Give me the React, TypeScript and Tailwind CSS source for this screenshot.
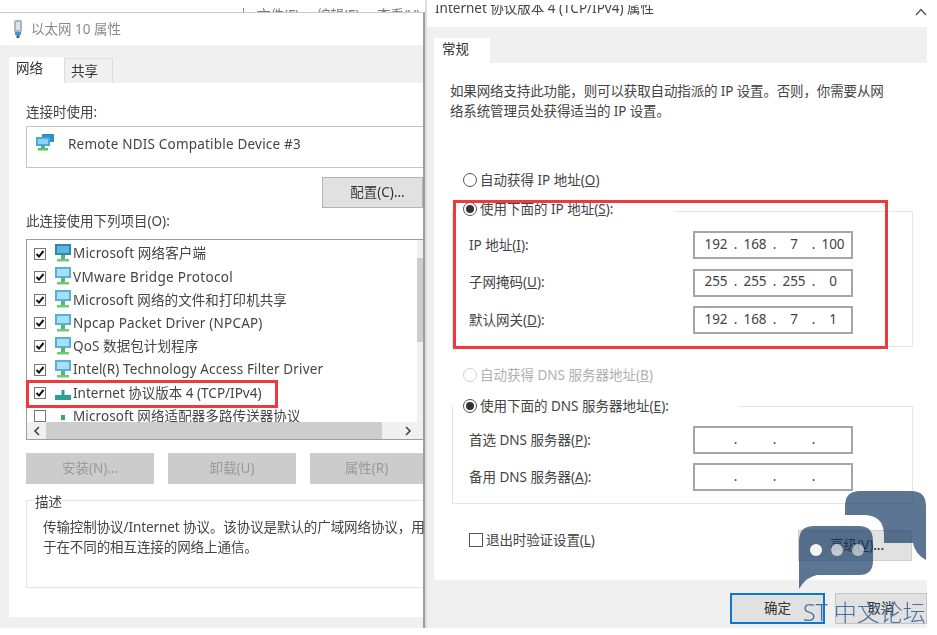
const fontStack = "font-['Noto_Sans','Noto_Sans_CJK_SC',sans-serif]"

const Radio = ({ checked, disabled }: { checked?: boolean; disabled?: boolean }) => (
  <span
    className={`flex h-[14px] w-[14px] shrink-0 items-center justify-center rounded-full border ${
      disabled ? "border-[#cfcfcf]" : "border-[#555]"
    }`}>
    {checked && <span className="h-[8px] w-[8px] rounded-full bg-[#333]" />}
  </span>
)

const Check = ({ checked }: { checked: boolean }) => (
  <span className="flex h-[12px] w-[12px] shrink-0 items-center justify-center border border-[#777] bg-white">
    {checked && (
      <svg width="10" height="10" viewBox="0 0 10 10" fill="none">
        <path d="M1.5 5 4 7.6 8.5 2" stroke="#111" strokeWidth="2" />
      </svg>
    )}
  </span>
)

const MonitorIcon = ({ dark }: { dark?: boolean }) => (
  <svg width="18" height="19" viewBox="0 0 18 19" className="shrink-0">
    <rect x="1" y="0" width="16" height="11" fill={dark ? "#2f86b4" : "#55b0dc"} />
    <rect x="3" y="2" width="12" height="7" fill={dark ? "#5fb6da" : "#a5e0f4"} />
    <rect x="7" y="11" width="4" height="4" fill="#59b868" />
    <rect x="3" y="15" width="12" height="2.5" fill="#6ccb78" />
  </svg>
)

const AdapterIcon = () => (
  <svg width="18" height="18" viewBox="0 0 18 18" className="shrink-0">
    <rect x="7.5" y="6" width="3" height="6" fill="#2d9c8c" />
    <rect x="1" y="11" width="16" height="5" fill="#2f9f92" />
  </svg>
)

const SmallAdapterIcon = () => (
  <svg width="18" height="18" viewBox="0 0 18 18" className="shrink-0">
    <rect x="7" y="8" width="4" height="5" fill="#3aa85c" />
  </svg>
)

const DeviceIcon = () => (
  <svg width="18" height="17" viewBox="0 0 18 17" className="shrink-0">
    <rect x="6" y="0" width="12" height="8" fill="#2f8fc8" />
    <rect x="0" y="3" width="14" height="9" fill="#4aa8dc" />
    <rect x="2" y="5" width="10" height="5" fill="#8dd2f0" />
    <rect x="5" y="12" width="4" height="2" fill="#58b565" />
    <rect x="2" y="14" width="10" height="2.5" fill="#5cbf6c" />
  </svg>
)

const PlugIcon = () => (
  <svg width="10" height="18" viewBox="0 0 10 18">
    <rect x="1" y="0" width="8" height="12" rx="1.5" fill="#a9b6c2" />
    <rect x="3" y="2" width="4" height="8" fill="#dbe4ea" />
    <rect x="2" y="12" width="6" height="3" fill="#4d8fc0" />
    <rect x="3.5" y="15" width="3" height="3" fill="#2f6f9f" />
  </svg>
)

const Chevron = ({ dir }: { dir: "left" | "right" }) => (
  <svg width="8" height="10" viewBox="0 0 8 10" fill="none">
    <path d={dir === "left" ? "M6 1 2 5l4 4" : "M2 1l4 4-4 4"} stroke="#444" strokeWidth="1.6" />
  </svg>
)

const items = [
  { label: "Microsoft 网络客户端", checked: true, icon: <MonitorIcon dark />, tracking: "tracking-[0.15px]" },
  { label: "VMware Bridge Protocol", checked: true, icon: <MonitorIcon />, tracking: "tracking-[0.3px]" },
  { label: "Microsoft 网络的文件和打印机共享", checked: true, icon: <MonitorIcon />, tracking: "tracking-[0.1px]" },
  { label: "Npcap Packet Driver (NPCAP)", checked: true, icon: <MonitorIcon />, tracking: "tracking-[0.2px]" },
  { label: "QoS 数据包计划程序", checked: true, icon: <MonitorIcon />, tracking: "tracking-[0.1px]" },
  { label: "Intel(R) Technology Access Filter Driver", checked: true, icon: <MonitorIcon />, tracking: "tracking-[0.13px]" },
  { label: "Internet 协议版本 4 (TCP/IPv4)", checked: true, icon: <AdapterIcon />, tracking: "tracking-[0px]" },
  { label: "Microsoft 网络适配器多路传送器协议", checked: false, icon: <SmallAdapterIcon />, tracking: "tracking-[0.1px]" }
]

const IpInput = ({ parts }: { parts: string[] }) => (
  <div className="flex h-[28px] w-[160px] shrink-0 items-center border-2 border-[#a6a6a6] bg-white pb-[2px] pl-[7px] text-[#444]">
    {parts.map((part, i) => (
      <div key={i} className="flex">
        <span className="w-[28px] text-center">{part}</span>
        {i < 3 && <span className="w-[11px] text-center">.</span>}
      </div>
    ))}
  </div>
)

const FieldRow = ({ label, parts }: { label: React.ReactNode; parts: string[] }) => (
  <div className="flex items-center pl-[16px]">
    <div className="w-[224px] text-[#444]">{label}</div>
    <IpInput parts={parts} />
  </div>
)

const LeftWindow = () => (
  <div className="flex h-[628px] w-[425px] shrink-0 flex-col">
    <div className="flex h-[12px] items-start overflow-hidden pl-[243px] text-[#777]">
      <span className="mt-[8px] h-[4px] w-[1px] bg-[#888]" />
      <span className="mt-[5px] ml-[13px] w-[60px] leading-[20px]">文件(F)</span>
      <span className="mt-[5px] w-[60px] leading-[20px]">编辑(E)</span>
      <span className="mt-[5px] leading-[20px]">查看(V)</span>
    </div>
    <div className="flex min-h-0 flex-1 flex-col border-t border-r-2 border-t-[#c8c8c8] border-r-[#9c9c9c]">
      <div className="flex h-[32px] items-center gap-[9px] pl-[13px] text-[#8a8a8a]">
        <PlugIcon />
        <span className="-ml-[1px]">以太网 10 属性</span>
      </div>
      <div className="flex flex-1 flex-col bg-[#f0f0f0] pl-[9px]">
        <div className="flex h-[38px] items-end">
          <div className="flex h-[26px] w-[55px] items-center bg-white pb-[4px] pl-[7px] text-[#333]">网络</div>
          <div className="flex h-[25px] w-[49px] items-center border border-b-0 border-[#dcdcdc] pl-[6px] text-[#333]">
            共享
          </div>
        </div>
        <div className="flex h-[534px] flex-col bg-white pl-[17px]">
          <div className="mt-[19px] h-[20px] text-[#444]">连接时使用:</div>
          <div className="mt-[4px] flex h-[42px] items-start gap-[14px] border border-r-0 border-[#c4c4c4] pt-[7px] pl-[9px] tracking-[0.2px] text-[#444]">
            <DeviceIcon />
            <span>Remote NDIS Compatible Device #3</span>
          </div>
          <button className="mt-[9px] h-[31px] w-[101px] self-end border border-[#b4b4b4] bg-[#e1e1e1] pl-[10px] text-[#333]">
            配置(C)...
          </button>
          <div className="mt-[3px] h-[20px] text-[#444]">此连接使用下列项目(O):</div>
          <div className="mt-[8px] flex h-[201px] flex-col border border-r-0 border-[#9d9d9d]">
            <div className="flex min-h-0 flex-1">
              <div className="min-w-0 flex-1 overflow-hidden pt-[2px]">
                {items.map(item => (
                  <div
                    key={item.label}
                    className={`flex h-[23.2px] items-center pl-[7px] whitespace-nowrap text-[#444] ${item.tracking}`}>
                    <Check checked={item.checked} />
                    <span className="mr-[1px] ml-[8px]">{item.icon}</span>
                    <span>{item.label}</span>
                  </div>
                ))}
              </div>
              <div className="flex w-[6px] shrink-0 flex-col bg-[#f0f0f0] pt-[18px]">
                <div className="h-[84px] bg-[#cdcdcd]" />
              </div>
            </div>
            <div className="flex h-[17px] shrink-0 items-center bg-[#f0f0f0]">
              <div className="flex w-[19px] justify-center">
                <Chevron dir="left" />
              </div>
              <div className="h-full w-[336px] bg-[#cdcdcd]" />
              <div className="pl-[22px]">
                <Chevron dir="right" />
              </div>
            </div>
          </div>
          <div className="mt-[13px] flex h-[31px] gap-[14px] text-[#9a9a9a]">
            <div className="flex w-[128px] items-center justify-center bg-[#cccccc]">安装(N)...</div>
            <div className="flex w-[128px] items-center justify-center bg-[#cccccc]">卸载(U)</div>
            <div className="flex flex-1 items-center justify-center bg-[#cccccc]">属性(R)</div>
          </div>
          <div className="mt-[16px] h-[88px] border border-r-0 border-[#e2e2e2]">
            <div className="-mt-[9px] ml-[7px] h-[20px] w-fit bg-white px-[1px] leading-[20px] text-[#444]">描述</div>
            <div className="mt-[5px] ml-[16px] leading-[20px] tracking-[-0.08px] whitespace-nowrap text-[#444]">
              <div>传输控制协议/Internet 协议。该协议是默认的广域网络协议，用</div>
              <div>于在不同的相互连接的网络上通信。</div>
            </div>
          </div>
        </div>
      </div>
    </div>
  </div>
)

const RightWindow = () => (
  <div className="flex h-[628px] w-[502px] shrink-0 flex-col border-l-2 border-[#dedede]">
    <div className="flex h-[27px] shrink-0 items-start justify-between pl-[8px]">
      <div className="mt-[5px] h-[12px] overflow-hidden text-[#444]">
        <div className="-mt-[7px] leading-[20px]">Internet 协议版本 4 (TCP/IPv4) 属性</div>
      </div>
      <svg width="12" height="8" viewBox="0 0 12 8" fill="none" className="mt-[8px]">
        <path d="M1 7 6 1.5 11 7" stroke="#555" strokeWidth="1.4" />
      </svg>
    </div>
    <div className="flex flex-1 flex-col bg-[#f0f0f0] pl-[7px]">
      <div className="flex h-[36px] shrink-0 items-end">
        <div className="flex h-[25px] w-[56px] items-center bg-white pb-[2px] pl-[8px] text-[#333]">常规</div>
      </div>
      <div className="flex h-[517px] shrink-0 flex-col bg-white pl-[18px]">
        <div className="mt-[18px] -ml-[2px] h-[40px] leading-[20px] tracking-[-0.13px] whitespace-nowrap text-[#444]">
          <div>如果网络支持此功能，则可以获取自动指派的 IP 设置。否则，你需要从网</div>
          <div>络系统管理员处获得适当的 IP 设置。</div>
        </div>
        <div className="mt-[49px] flex h-[20px] items-center gap-[3px] pl-[11px] text-[#444]">
          <Radio />
          <span>
            自动获得 IP 地址(<u>O</u>)
          </span>
        </div>
        <div className="mt-[21px] h-[136px] w-[461px] border border-[#e4e4e4]">
          <div className="-mt-[13px] flex h-[20px] w-[222px] items-center gap-[3px] bg-white pl-[10px] text-[#444]">
            <Radio checked />
            <span>
              使用下面的 IP 地址(<u>S</u>):
            </span>
          </div>
          <div className="mt-[12px] flex flex-col gap-[9.5px]">
            <FieldRow
              label={
                <>
                  IP 地址(<u>I</u>):
                </>
              }
              parts={["192", "168", "7", "100"]}
            />
            <FieldRow
              label={
                <>
                  子网掩码(<u>U</u>):
                </>
              }
              parts={["255", "255", "255", "0"]}
            />
            <FieldRow
              label={
                <>
                  默认网关(<u>D</u>):
                </>
              }
              parts={["192", "168", "7", "1"]}
            />
          </div>
        </div>
        <div className="mt-[18px] flex h-[20px] items-center gap-[3px] pl-[11px] text-[#b0b0b0]">
          <Radio disabled />
          <span>
            自动获得 DNS 服务器地址(<u>B</u>)
          </span>
        </div>
        <div className="mt-[21px] h-[98px] w-[461px] border border-[#e4e4e4]">
          <div className="-mt-[11px] flex h-[20px] w-[285px] items-center gap-[3px] bg-white pl-[10px] text-[#444]">
            <Radio checked />
            <span>
              使用下面的 DNS 服务器地址(<u>E</u>):
            </span>
          </div>
          <div className="mt-[10px] flex flex-col gap-[9px]">
            <FieldRow
              label={
                <>
                  首选 DNS 服务器(<u>P</u>):
                </>
              }
              parts={["", "", "", ""]}
            />
            <FieldRow
              label={
                <>
                  备用 DNS 服务器(<u>A</u>):
                </>
              }
              parts={["", "", "", ""]}
            />
          </div>
        </div>
        <div className="mt-[26px] flex h-[31px] w-[460px] items-start justify-between pl-[17px]">
          <div className="flex h-[20px] items-center gap-[3px] tracking-[-0.1px] text-[#444]">
            <span className="h-[14px] w-[14px] border border-[#555]" />
            <span>
              退出时验证设置(<u>L</u>)
            </span>
          </div>
          <button className="h-[31px] w-[114px] border border-[#cfcfcf] bg-[#e1e1e1] pl-[4px] text-[#111]">
            高级(<u>V</u>)...
          </button>
        </div>
      </div>
      <div className="mt-[13px] flex justify-end gap-[10px]">
        <button className="h-[31px] w-[95px] border-2 border-[#0a78d0] bg-[#e1e1e1] text-[#333]">确定</button>
        <button className="h-[31px] w-[92px] border border-[#c4c4c4] bg-[#e1e1e1] text-[#333]">取消</button>
      </div>
    </div>
  </div>
)

const Watermark = () => (
  <>
    <svg width="937" height="635" viewBox="0 0 937 635" className="pointer-events-none absolute top-0 left-0">
      <path
        d="M845 515V506Q845 491 860 491H911Q926 491 926 506V560Q915 554 913 543H884V535Q884 515 863 515Z"
        fill="#1f4269"
        fillOpacity="0.73"
      />
      <path
        d="M799 589V541Q799 526 814 526H859Q873 526 873 541V561Q873 575 859 575H817Q806 577 799 589Z"
        fill="#1f4269"
        fillOpacity="0.73"
      />
      <circle cx="816" cy="550" r="6" fill="#f4f4f4" />
      <circle cx="837" cy="550" r="6" fill="#f4f4f4" fillOpacity="0.7" />
      <circle cx="858" cy="550" r="6" fill="#f4f4f4" fillOpacity="0.6" />
    </svg>
    <div className="pointer-events-none absolute top-[595px] left-[803px] text-[23px] leading-[34px] font-light whitespace-nowrap text-[#46709c]">
      ST 中文论坛
    </div>
  </>
)

export default function App() {
  return (
    <div className={`relative flex h-[635px] w-[937px] overflow-hidden bg-white text-[13.5px] ${fontStack}`}>
      <div className="flex blur-[0.4px]">
        <LeftWindow />
        <RightWindow />
      </div>
      <div className="absolute top-[380px] left-[26px] h-[28px] w-[252px] border-[3px] border-[#ee3a3f]" />
      <div className="absolute top-[200px] left-[453px] h-[149px] w-[435px] border-[3px] border-[#ee3a3f]" />
      <Watermark />
    </div>
  )
}
